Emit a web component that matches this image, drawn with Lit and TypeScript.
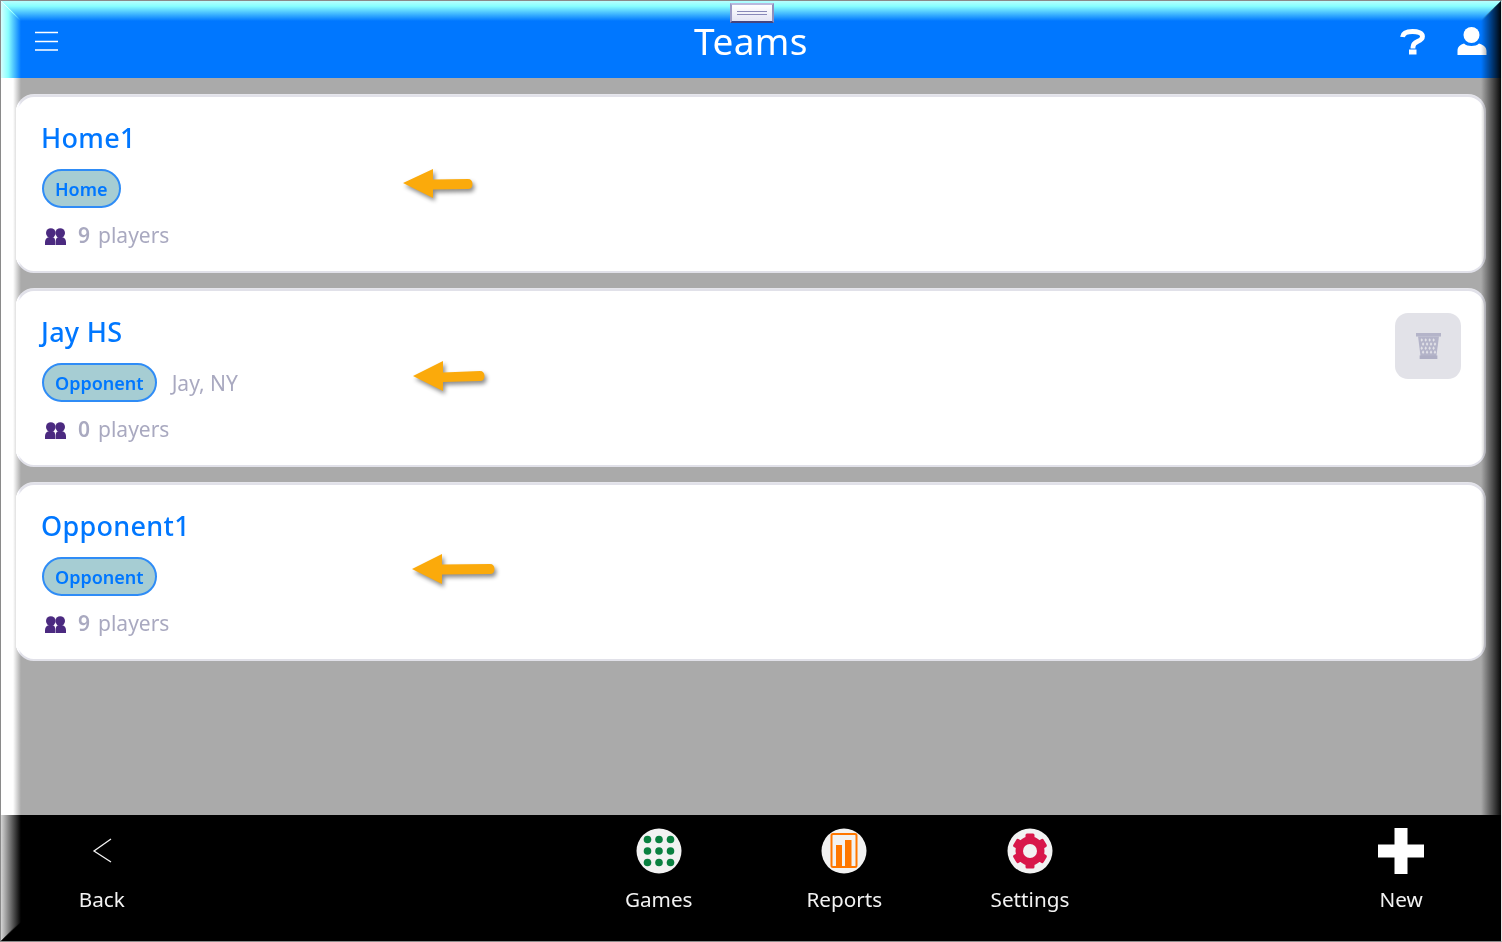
import { LitElement, html, css, svg } from "lit";
import { customElement } from "lit/decorators.js";

const teams = [
  { name: "Home1", tag: "Home", place: "", count: 9, del: false, arrow: "a1" },
  { name: "Jay HS", tag: "Opponent", place: "Jay, NY", count: 0, del: true, arrow: "a2" },
  { name: "Opponent1", tag: "Opponent", place: "", count: 9, del: false, arrow: "a3" },
];

const people = svg`<g fill="#4b2a80"><circle cx="5.800" cy="5" r="4.800"/><circle cx="15.200" cy="5" r="4.800"/>
<path d="M0 17v-3c0-3 2-4.500 4.500-5h2.600c2.400.5 3.200 2 3.200 5v3z"/><path d="M21 17v-3c0-3-2-4.500-4.500-5h-2.600c-2.400.5-3.200 2-3.200 5v3z"/></g>`;

const basket = svg`<path d="M0 2h24v3H0z" fill="#b4b4c9"/><path d="M2 5l2.500 17.500h15L22 5z" fill="#b4b4c9"/><path d="M3.500 21h17v3h-17z" fill="#aeaec4"/>
<g fill="#e2e2e8">${[0, 1, 2, 3].map((r) => [0, 1, 2, 3].map((c) => svg`<path d="M${5.500 + c * 3.800 + (r % 2) * 1.300} ${6.500 + r * 3.400}l1.200 1.500-1.200 1.500-1.200-1.500z"/>`))}</g>`;

@customElement("team-card")
class TeamCard extends LitElement {
  static properties = { team: { attribute: false } };
  team: any;
  static styles = css`
    :host { display: block; }
    .card {
      position: relative; box-sizing: border-box; height: 178px; background: #fff;
      border: 2px solid #e1e1e9; border-radius: 18px; box-shadow: 0 -1px 0 #e6e6ec;
      padding: 23px 23px 0 24px; display: flex; justify-content: space-between; align-items: flex-start;
      font-family: "Noto Sans", sans-serif;
    }
    .name { font-size: 27px; line-height: 36px; color: #0077ff; letter-spacing: .3px; font-weight: 500; margin-left: -1px; }
    .row { display: flex; align-items: center; gap: 15px; margin-top: 13px; }
    .badge {
      box-sizing: border-box; height: 39px; padding: 0 11px; border: 2px solid #2f8cf6; border-radius: 20px;
      background: #a6cdd3; color: #0077ff; font-size: 18px; font-weight: 600; line-height: 36px;
    }
    .place { font-size: 21px; color: #a9a9c0; }
    .meta { display: flex; align-items: center; margin-top: 12px; margin-left: 3px; font-size: 21px; line-height: 30px; color: #a9a9c0; }
    .meta svg { width: 21px; height: 17px; margin-right: 12px; margin-top: 2px; }
    .num { font-weight: 600; margin-right: 8px; }
    .del {
      width: 66px; height: 66px; background: #e2e2e8; border-radius: 13px; border: 0; padding: 0; margin-top: -1px;
      display: flex; align-items: center; justify-content: center;
    }
    .del svg { width: 25px; height: 26px; }
    .arrow { position: absolute; width: 90px; height: 50px; overflow: visible; filter: drop-shadow(2px 3px 2px rgba(0,0,0,.45)); }
    .a1 { left: 384px; top: 61px; }
    .a2 { left: 394px; top: 59px; }
    .a3 { left: 393px; top: 58px; }
  `;
  render() {
    const t = this.team;
    return html`<div class="card">
      <div>
        <div class="name">${t.name}</div>
        <div class="row"><span class="badge">${t.tag}</span>${t.place ? html`<span class="place">${t.place}</span>` : ""}</div>
        <div class="meta"><svg viewBox="0 0 21 17">${people}</svg><span class="num">${t.count}</span><span>players</span></div>
      </div>
      ${t.del ? html`<button class="del"><svg viewBox="0 2 24 22" preserveAspectRatio="none">${basket}</svg></button>` : ""}
      <svg class="arrow ${t.arrow}" viewBox="0 0 90 50">
        ${t.arrow === "a1"
          ? svg`<path d="M1 25L31 11v10.500l35-.5c3 0 4.500 2 4.500 5s-1.500 5-4.500 5l-35 .5V40z" fill="#fbaa0b"/>`
          : t.arrow === "a2"
          ? svg`<path d="M1 26L31 11v11.500l37-1.500c3 0 4.500 2 4.500 5s-1.500 5-4.500 5l-37 1V41z" fill="#fbaa0b"/>`
          : svg`<path d="M1 26L31 11v10.500l48-.5c3 0 4.500 2 4.500 5s-1.500 5-4.500 5l-48 .5V41z" fill="#fbaa0b"/>`}
      </svg>
    </div>`;
  }
}

@customElement("app-root")
class AppRoot extends LitElement {
  static styles = css`
    :host { display: block; }
    .page {
      position: relative; box-sizing: border-box; width: 100vw; height: 100vh; overflow: hidden;
      display: flex; flex-direction: column; background: #aaa; font-family: "Noto Sans", sans-serif;
    }
    header {
      flex: none; height: 78px; background: #0077ff; color: #fff; display: grid;
      grid-template-columns: 1fr auto 1fr; align-items: center;
    }
    .menu { margin-left: 34px; width: 25px; height: 20px; display: block; margin-top: 4px; }
    h1 { margin: 4px 0 0; font-size: 37px; font-weight: 400; line-height: 48px; letter-spacing: .4px; }
    .acts { justify-self: end; display: flex; align-items: center; gap: 29px; margin-right: 15px; margin-top: 4px; }
    .q { width: 29px; height: 30px; display: block; }
    .u { width: 30px; height: 30px; display: block; }
    main { flex: 1; min-height: 0; display: flex; flex-direction: column; gap: 16px; padding: 17px 16px 0 16px; }
    footer {
      flex: none; height: 127px; background: #000; color: #f2f2f2; display: grid;
      grid-template-columns: repeat(8, 1fr); padding: 0 8px 0 9px; font-size: 20.700px;
    }
    .tab { display: flex; flex-direction: column; align-items: center; padding-top: 13px; }
    .ic { width: 46px; height: 46px; display: block; }
    .tab span { margin-top: 10px; line-height: 30px; }
    .handle {
      position: absolute; left: 730px; top: 3px; width: 44px; height: 20px; box-sizing: border-box;
      background: linear-gradient(#fff, #e4e4f4); border: 2px solid; border-color: #b9b9dd #8f8fbe #45457f #9a9ac6;
      display: flex; flex-direction: column; justify-content: center; gap: 2px; align-items: center;
    }
    .handle i { display: block; width: 30px; height: 1px; background: #8888b8; }
    .edge { position: absolute; pointer-events: none; }
    .left, .top { mix-blend-mode: plus-lighter; }
    .right, .bottom { mix-blend-mode: multiply; }
    .top { left: 0; right: 0; top: 0; height: 21px; background: linear-gradient(to bottom, #c0c0c0, #000); clip-path: polygon(0 0, 100% 0, calc(100% - 20px) 100%, 20px 100%); }
    .left { left: 0; top: 0; bottom: 0; width: 21px; background: linear-gradient(to right, #e0e0e0, #000); clip-path: polygon(0 0, 100% 20px, 100% calc(100% - 20px), 0 100%); }
    .right { right: 0; top: 0; bottom: 0; width: 21px; background: linear-gradient(to right, #fff, #000); clip-path: polygon(100% 0, 0 20px, 0 calc(100% - 20px), 100% 100%); }
    .bottom { left: 0; right: 0; bottom: 0; height: 21px; background: linear-gradient(to bottom, #fff, #000); clip-path: polygon(20px 0, calc(100% - 20px) 0, 100% 100%, 0 100%); }
    .frame { position: absolute; inset: 0; pointer-events: none; border: 1px solid #8a8a8a; border-right-color: #e6e6e6; box-sizing: border-box; }
  `;
  render() {
    return html`<div class="page">
      <header>
        <svg class="menu" viewBox="0 0 25 20"><path d="M1 1.500h23M1 10.500h23M1 19h23" stroke="#fff" stroke-width="1.500"/></svg>
        <h1>Teams</h1>
        <div class="acts">
          <svg class="q" viewBox="0 0 29 30"><path d="M3.500 11C4 7 8 5.500 13.500 5.500c5.500 0 10 1.500 10 5 0 2.800-2.500 4-5 5-3 1.200-4.500 2.500-4.500 5.500v1.500" fill="none" stroke="#fff" stroke-width="4.800"/><path d="M10 23.500h7.500v5H10z" fill="#fff"/></svg>
          <svg class="u" viewBox="0 0 30 30"><circle cx="14.500" cy="9" r="8" fill="#fff"/><path d="M.5 29v-4c0-4.500 3-6.500 6.500-7.500 2 1.800 4.500 2.500 7.500 2.500s5.500-.7 7.500-2.500c3.500 1 7.500 3 7.500 7.500v4z" fill="#fff"/></svg>
        </div>
      </header>
      <main>${teams.map((t) => html`<team-card .team=${t}></team-card>`)}</main>
      <footer>
        <div class="tab">
          <svg class="ic" viewBox="0 0 46 46"><path d="M32 11L15 23l17 11" fill="none" stroke="#f2f2f2" stroke-width="1.300"/></svg>
          <span>Back</span>
        </div>
        <div></div><div></div>
        <div class="tab">
          <svg class="ic" viewBox="0 0 46 46"><circle cx="23" cy="23" r="22.500" fill="#f2f2f2"/>
            <g fill="#0a8040">${[11.500, 23, 34.500].map((y) => [11.500, 23, 34.500].map((x) => svg`<circle cx="${x}" cy="${y}" r="3.800"/>`))}</g></svg>
          <span>Games</span>
        </div>
        <div class="tab">
          <svg class="ic" viewBox="0 0 46 46"><circle cx="23" cy="23" r="22.500" fill="#f2f2f2"/>
            <rect x="10.500" y="6" width="25" height="33" rx="1.500" fill="none" stroke="#ff7700" stroke-width="2"/>
            <path d="M15 17h6v21h-6zM24 12h6.500v26H24z" fill="#ff7700"/></svg>
          <span>Reports</span>
        </div>
        <div class="tab">
          <svg class="ic" viewBox="0 0 46 46"><circle cx="23" cy="23" r="22.500" fill="#f2f2f2"/>
            <g fill="#d8174a"><circle cx="23" cy="23" r="14.500"/>
            ${[0, 60, 120, 180, 240, 300].map((a) => svg`<rect x="18.500" y="5.500" width="9" height="8" rx="1.500" transform="rotate(${a} 23 23)"/>`)}</g>
            <circle cx="23" cy="23" r="7" fill="#f2f2f2"/></svg>
          <span>Settings</span>
        </div>
        <div></div>
        <div class="tab">
          <svg class="ic" viewBox="0 0 46 46"><path d="M16.500 0h13v16.500H46v13H29.500V46h-13V29.500H0v-13h16.500z" fill="#fff"/></svg>
          <span>New</span>
        </div>
      </footer>
      <div class="edge top"></div>
      <div class="edge left"></div>
      <div class="edge right"></div>
      <div class="edge bottom"></div>
      <div class="frame"></div>
      <div class="handle"><i></i><i></i></div>
    </div>`;
  }
}
